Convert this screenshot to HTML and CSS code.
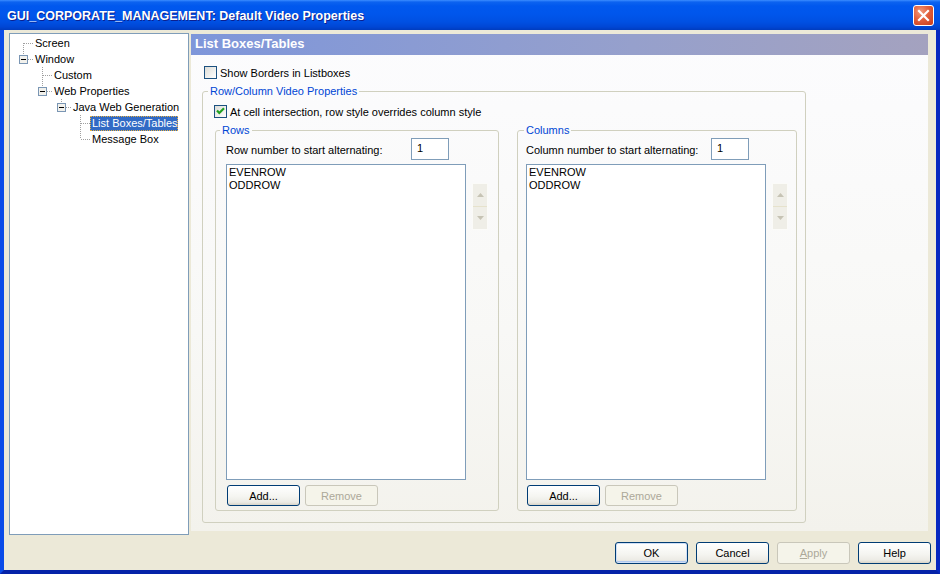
FILE: index.html
```html
<!DOCTYPE html>
<html>
<head>
<meta charset="utf-8">
<link rel="stylesheet" href="styles.css">
</head>
<body>
<div class="window">
  <div class="titlebar">
    <span class="title">GUI_CORPORATE_MANAGEMENT: Default Video Properties</span>
    <span class="close"><svg width="19" height="19" viewBox="0 0 19 19"><path d="M5 5 L14 14 M14 5 L5 14" stroke="#fff" stroke-width="2.2" stroke-linecap="square"/></svg></span>
  </div>
  <div class="frame">
    <div class="client">
      <div class="main">
        <div class="tree">
          <div class="trow"><svg class="tl" width="23" height="16"><line x1="13.5" y1="8" x2="13.5" y2="16"/><line x1="14" y1="8.5" x2="23" y2="8.5"/></svg><span class="tlabel">Screen</span></div>
          <div class="trow"><svg class="tl" width="23" height="16"><line x1="13.5" y1="0" x2="13.5" y2="4"/><line x1="18" y1="8.5" x2="23" y2="8.5"/><rect class="bx" x="9.5" y="4.5" width="8" height="8"/><line class="mn" x1="11" y1="8.5" x2="16" y2="8.5"/></svg><span class="tlabel">Window</span></div>
          <div class="trow"><svg class="tl" width="42" height="16"><line x1="32.5" y1="0" x2="32.5" y2="16"/><line x1="33" y1="8.5" x2="42" y2="8.5"/></svg><span class="tlabel">Custom</span></div>
          <div class="trow"><svg class="tl" width="42" height="16"><line x1="32.5" y1="0" x2="32.5" y2="4"/><line x1="37" y1="8.5" x2="42" y2="8.5"/><rect class="bx" x="28.5" y="4.5" width="8" height="8"/><line class="mn" x1="30" y1="8.5" x2="35" y2="8.5"/></svg><span class="tlabel">Web Properties</span></div>
          <div class="trow"><svg class="tl" width="61" height="16"><line x1="51.5" y1="0" x2="51.5" y2="4"/><line x1="56" y1="8.5" x2="61" y2="8.5"/><rect class="bx" x="47.5" y="4.5" width="8" height="8"/><line class="mn" x1="49" y1="8.5" x2="54" y2="8.5"/></svg><span class="tlabel">Java Web Generation</span></div>
          <div class="trow"><svg class="tl" width="80" height="16"><line x1="70.5" y1="0" x2="70.5" y2="16"/><line x1="71" y1="8.5" x2="80" y2="8.5"/></svg><span class="tlabel selected">List Boxes/Tables</span></div>
          <div class="trow"><svg class="tl" width="80" height="16"><line x1="70.5" y1="0" x2="70.5" y2="8"/><line x1="71" y1="8.5" x2="80" y2="8.5"/></svg><span class="tlabel">Message Box</span></div>
        </div>
        <div class="panel">
          <div class="phead">List Boxes/Tables</div>
          <div class="pbody">
            <label class="cbrow"><span class="cb"></span><span>Show Borders in Listboxes</span></label>
            <fieldset class="group outer">
              <legend class="lg-outer">Row/Column Video Properties</legend>
              <label class="cbrow cbrow2"><span class="cb"><svg width="11" height="11" viewBox="0 0 11 11"><polyline points="2,4.5 4.3,7 9,2.3" fill="none" stroke="#21A121" stroke-width="2.2"/></svg></span><span>At cell intersection, row style overrides column style</span></label>
              <div class="groups">
                <fieldset class="group inner rows">
                  <legend class="lg-rows">Rows</legend>
                  <div class="numrow"><span class="numlabel">Row number to start alternating:</span><span class="input">1</span></div>
                  <div class="listrow">
                    <div class="listbox"><div class="item">EVENROW</div><div class="item">ODDROW</div></div>
                    <div class="spin"><div class="sp"><svg width="7" height="4"><polygon points="0,4 3.5,0 7,4" fill="#C6C3B4"/></svg></div><div class="sp"><svg width="7" height="4"><polygon points="0,0 3.5,4 7,0" fill="#C6C3B4"/></svg></div></div>
                  </div>
                  <div class="btnrow"><span class="btn small">Add...</span><span class="btn small disabled">Remove</span></div>
                </fieldset>
                <fieldset class="group inner cols">
                  <legend class="lg-cols">Columns</legend>
                  <div class="numrow"><span class="numlabel">Column number to start alternating:</span><span class="input">1</span></div>
                  <div class="listrow">
                    <div class="listbox"><div class="item">EVENROW</div><div class="item">ODDROW</div></div>
                    <div class="spin"><div class="sp"><svg width="7" height="4"><polygon points="0,4 3.5,0 7,4" fill="#C6C3B4"/></svg></div><div class="sp"><svg width="7" height="4"><polygon points="0,0 3.5,4 7,0" fill="#C6C3B4"/></svg></div></div>
                  </div>
                  <div class="btnrow"><span class="btn small">Add...</span><span class="btn small disabled">Remove</span></div>
                </fieldset>
              </div>
            </fieldset>
          </div>
        </div>
      </div>
      <div class="footer">
        <span class="btn default">OK</span>
        <span class="btn">Cancel</span>
        <span class="btn disabled"><u>A</u>pply</span>
        <span class="btn">Help</span>
      </div>
    </div>
  </div>
</div>
</body>
</html>
```
FILE: styles.css
```css
* { box-sizing: border-box; }
html, body { margin: 0; padding: 0; }
body {
  width: 940px; height: 574px; overflow: hidden;
  font-family: "Liberation Sans", Arial, sans-serif;
  font-size: 11px; color: #000;
  background: #0A3CD0;
}
.window { width: 940px; height: 574px; display: flex; flex-direction: column; }
.titlebar {
  height: 30px; flex: none;
  display: flex; align-items: center; justify-content: space-between;
  padding: 0 6px 0 7px;
  background: linear-gradient(#3B8DFF 0, #0C63F0 2px, #0058EE 6px, #0056EC 14px, #0050E2 22px, #0046D4 27px, #003CBE 30px);
}
.title {
  color: #fff; font-weight: bold; font-size: 12.5px;
  text-shadow: 1px 1px 0 #0C1F8E;
  padding-top: 1px;
}
.close {
  width: 21px; height: 21px;
  border: 1px solid #fff; border-radius: 3px;
  background: radial-gradient(circle at 35% 30%, #F09A7C 0, #E2603D 45%, #C93B17 100%);
  display: flex; align-items: center; justify-content: center;
  margin-top: 1px;
}
.frame {
  flex: 1; display: flex;
  border-left: 4px solid #0A4BE8;
  border-right: 4px solid #0628C0;
  border-bottom: 4px solid #0522A8;
}
.client {
  flex: 1; background: #ECE9D8;
  display: flex; flex-direction: column;
  padding: 3px 5px 0 5px;
}
.main { display: flex; align-items: flex-start; height: 502px; flex: none; }
.tree {
  width: 180px; height: 502px; flex: none;
  border: 1px solid #7F9DB9; background: #fff;
  padding-top: 1px;
}
.trow { height: 16px; display: flex; align-items: center; }
.tl { flex: none; display: block; }
.tl line { stroke: #A0A0A0; stroke-width: 1; stroke-dasharray: 1 1; shape-rendering: crispEdges; }
.tl .bx { fill: #F2F1EC; stroke: #7A96B4; stroke-width: 1; shape-rendering: crispEdges; }
.tl .mn { stroke: #000; stroke-dasharray: none; }
.tlabel { padding: 0 2px; line-height: 15px; white-space: nowrap; }
.tlabel.selected {
  background: #316AC5; color: #fff;
  outline: 1px dotted #E8B040; outline-offset: -1px;
  padding: 0 2px; width: 88px;
}
.panel {
  width: 737px; height: 497px; flex: none;
  margin: 1px 0 0 2px;
  background: linear-gradient(#FCFCFE, #F8F8F6 60%, #F3F2EC);
}
.phead {
  height: 21px; line-height: 19px;
  padding-left: 4px;
  color: #fff; font-weight: bold; font-size: 13px;
  background: linear-gradient(90deg, #7E96DA, #96A0CC 60%, #A4A2BF);
}
.pbody { padding: 11px 0 0 13px; }
.cbrow { display: flex; align-items: center; height: 13px; gap: 3px; white-space: nowrap; }
.cb {
  width: 13px; height: 13px; flex: none;
  border: 1px solid #1C5180;
  background: linear-gradient(135deg, #DCDCD7, #FFFFFF);
  display: flex; align-items: center; justify-content: center;
}
.cb svg { display: block; }
fieldset.group {
  margin: 0; min-width: 0;
  border: 1px solid #D0D0BF; border-radius: 3px;
}
legend {
  padding: 0 2px; line-height: 13px; color: #0046D5;
}
.outer {
  width: 604px; margin: 6px 0 0 -2px !important;
  padding: 0 8px 11px 12px;
}
.lg-outer { margin-left: -7px; }
.cbrow2 { margin-top: 7px; margin-left: -1px; gap: 3px; }
.groups { display: flex; gap: 18px; margin-top: 6px; }
.inner { padding: 0 0 4px 10px; }
.rows { width: 284px; }
.cols { width: 280px; padding-left: 8px; }
.lg-rows { margin-left: -6px; }
.lg-cols { margin-left: -2px; }
.numrow { display: flex; align-items: center; height: 22px; margin-top: 1px; }
.numlabel { width: 185px; flex: none; padding-top: 2px; white-space: nowrap; }
.input {
  width: 38px; height: 22px;
  border: 1px solid #7F9DB9; background: #fff;
  padding: 3px 0 0 5px;
}
.listrow { display: flex; gap: 6px; margin-top: 4px; }
.listbox {
  width: 240px; height: 316px; flex: none;
  border: 1px solid #7F9DB9; background: #fff;
  padding: 1px 2px;
}
.item { line-height: 13px; }
.spin {
  width: 16px; height: 47px; margin-top: 19px;
  border: 1px solid #FBFBF8;
  background: #EFEEE7;
  display: flex; flex-direction: column;
}
.sp { flex: 1; display: flex; align-items: center; justify-content: center; }
.sp + .sp { border-top: 1px solid #E6E2CC; }
.sp svg { display: block; }
.btnrow { display: flex; gap: 5px; margin-top: 5px; padding-left: 1px; }
.btn {
  width: 73px; height: 22px; flex: none;
  border: 1px solid #003C74; border-radius: 3px;
  background: linear-gradient(#FFFFFF, #F5F5F1 55%, #ECEBE5 85%, #D8D4C8);
  display: flex; align-items: center; justify-content: center;
  white-space: nowrap;
}
.btn.small { height: 21px; }
.btn.default { box-shadow: inset 0 0 0 1px #CFDFF6, inset 0 -1px 0 1px #B0C8EE; }
.btn.disabled {
  border-color: #C9C7BA; color: #ACA899;
  background: #F5F4EA;
}
.footer {
  display: flex; justify-content: flex-end; gap: 8px;
  padding-top: 7px;
}
```
